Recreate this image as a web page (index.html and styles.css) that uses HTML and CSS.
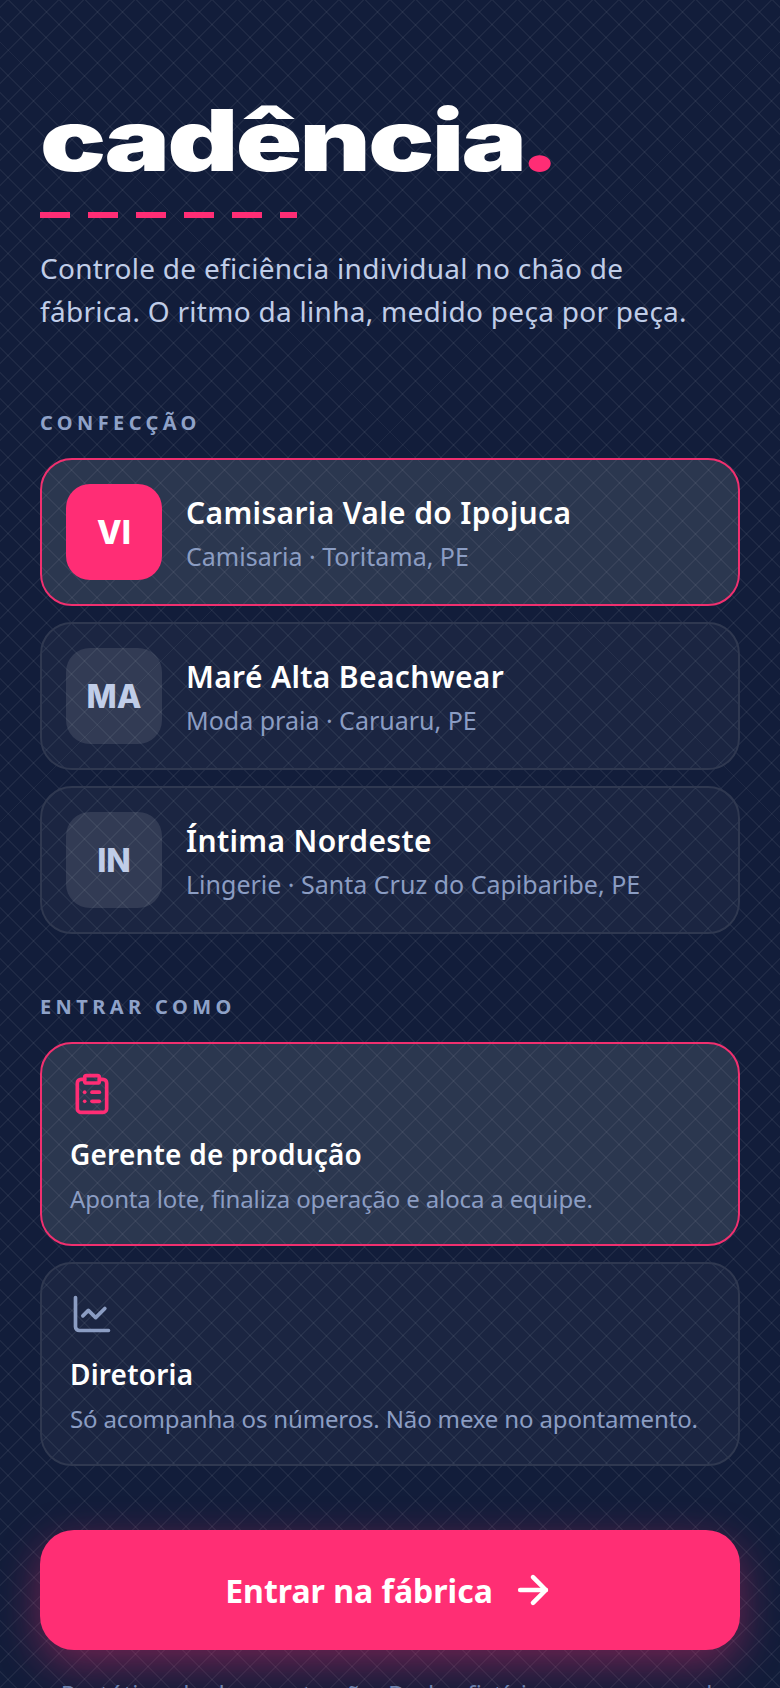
FILE: index.html
```html
<!DOCTYPE html>
<html lang="pt-BR">
  <head>
    <meta charset="UTF-8" />
    <meta name="viewport" content="width=device-width, initial-scale=1.0" />
    <title>Cadência</title>
    <link rel="stylesheet" href="styles.css">
  </head>
  <body>
    <main class="screen">
      <header class="brand">
        <h1 class="logo"><span class="logo-word">cadência<span class="logo-dot">.</span></span></h1>
        <div class="dashes"></div>
        <p class="tagline">Controle de eficiência individual no chão de fábrica. O ritmo da linha, medido peça por peça.</p>
      </header>

      <section class="group">
        <h2 class="group-label">CONFECÇÃO</h2>
        <div class="list">
          <button class="card factory selected">
            <span class="avatar">VI</span>
            <span class="factory-text">
              <span class="factory-name">Camisaria Vale do Ipojuca</span>
              <span class="factory-sub">Camisaria · Toritama, PE</span>
            </span>
          </button>
          <button class="card factory">
            <span class="avatar">MA</span>
            <span class="factory-text">
              <span class="factory-name">Maré Alta Beachwear</span>
              <span class="factory-sub">Moda praia · Caruaru, PE</span>
            </span>
          </button>
          <button class="card factory">
            <span class="avatar">IN</span>
            <span class="factory-text">
              <span class="factory-name">Íntima Nordeste</span>
              <span class="factory-sub">Lingerie · Santa Cruz do Capibaribe, PE</span>
            </span>
          </button>
        </div>
      </section>

      <section class="group">
        <h2 class="group-label">ENTRAR COMO</h2>
        <div class="list">
          <button class="card role selected">
            <svg class="icon" viewBox="0 0 24 24"><rect x="8" y="2" width="8" height="4" rx="1"/><path d="M16 4h2a2 2 0 0 1 2 2v14a2 2 0 0 1-2 2H6a2 2 0 0 1-2-2V6a2 2 0 0 1 2-2h2"/><path d="M12 11h4"/><path d="M12 16h4"/><path d="M8 11h.01"/><path d="M8 16h.01"/></svg>
            <span class="role-name">Gerente de produção</span>
            <span class="role-sub">Aponta lote, finaliza operação e aloca a equipe.</span>
          </button>
          <button class="card role">
            <svg class="icon" viewBox="0 0 24 24"><path d="M3 3v16a2 2 0 0 0 2 2h16"/><path d="m19 9-5 5-4-4-3 3"/></svg>
            <span class="role-name">Diretoria</span>
            <span class="role-sub">Só acompanha os números. Não mexe no apontamento.</span>
          </button>
        </div>
      </section>

      <button class="enter">
        Entrar na fábrica
        <svg class="enter-icon" viewBox="0 0 24 24"><path d="M5 12h14"/><path d="m12 5 7 7-7 7"/></svg>
      </button>
      <p class="footnote">Protótipo de demonstração. Dados fictícios, sem uso real.</p>
    </main>
  </body>
</html>
```

FILE: styles.css
```css
* {
  box-sizing: border-box;
  margin: 0;
  padding: 0;
}
html,
body {
  height: 1688px;
  overflow: hidden;
}
body {
  background-color: #131d3a;
  color: #ffffff;
  font-family: "Noto Sans", Arial, sans-serif;
}

.screen {
  position: relative;
  height: 1688px;
  overflow: hidden;
  padding: 107px 40px 0;
  background-color: #121d3a;
  background-image:
    repeating-linear-gradient(45deg, transparent 0 11.2px, rgba(255, 255, 255, 0.05) 11.2px 12.6px, transparent 12.6px 18px),
    repeating-linear-gradient(-45deg, transparent 0 11.2px, rgba(255, 255, 255, 0.05) 11.2px 12.6px, transparent 12.6px 18px);
}

/* brand */
.brand {
  padding-bottom: 17px;
}
.logo {
  height: 67px;
  font-family: Inter, "Liberation Sans", sans-serif;
  font-size: 85px;
  font-weight: 900;
  line-height: 67px;
}
.logo-word {
  display: inline-block;
  letter-spacing: -2px;
  transform: scaleX(1.29);
  transform-origin: left center;
}
.logo-dot {
  margin-left: -4px;
  color: #ff2d75;
}
.dashes {
  width: 257px;
  height: 6px;
  margin-top: 38px;
  background-image: repeating-linear-gradient(90deg, #ff2d75 0 30px, transparent 30px 48px);
}
.tagline {
  max-width: 650px;
  margin-top: 29px;
  font-size: 28px;
  line-height: 43px;
  letter-spacing: 0.28px;
  color: #c0cde8;
}

/* sections */
.group {
  margin-top: 59px;
}
.group-label {
  font-size: 20px;
  font-weight: 700;
  line-height: 28px;
  letter-spacing: 4.4px;
  color: #8fa2c8;
}
.list {
  display: flex;
  flex-direction: column;
  gap: 16px;
  margin-top: 21px;
}
.card {
  display: flex;
  width: 100%;
  border: 2px solid #2f3850;
  border-radius: 32px;
  background: rgba(255, 255, 255, 0.04);
  color: inherit;
  font-family: inherit;
  text-align: left;
}
.card.selected {
  border-color: #f0306f;
  background: rgba(220, 235, 225, 0.13);
}

/* factory cards */
.factory {
  align-items: center;
  gap: 24px;
  height: 148px;
  padding: 0 24px;
}
.avatar {
  display: flex;
  flex: none;
  align-items: center;
  justify-content: center;
  width: 96px;
  height: 96px;
  border-radius: 24px;
  background: rgba(255, 255, 255, 0.1);
  color: #c0cde8;
  font-family: Inter, sans-serif;
  font-size: 32px;
  font-weight: 800;
}
.selected .avatar {
  background: #ff2d75;
  color: #ffffff;
}
.factory-text {
  display: flex;
  flex-direction: column;
  gap: 7px;
  padding-top: 3px;
}
.factory-name {
  font-size: 30px;
  font-weight: 600;
  line-height: 38px;
  letter-spacing: 0.35px;
}
.factory-sub {
  font-size: 25px;
  line-height: 34px;
  color: #8b9dc3;
}

/* role cards */
.role {
  flex-direction: column;
  height: 204px;
  padding: 28px;
}
.icon {
  flex: none;
  width: 44px;
  height: 44px;
  fill: none;
  stroke: #8b9dc3;
  stroke-width: 2;
  stroke-linecap: round;
  stroke-linejoin: round;
}
.selected .icon {
  stroke: #ff2d75;
}
.role-name {
  margin-top: 20px;
  font-size: 28px;
  font-weight: 600;
  line-height: 36px;
  letter-spacing: 0.2px;
}
.role-sub {
  margin-top: 11px;
  font-size: 24px;
  line-height: 32px;
  letter-spacing: -0.15px;
  color: #8b9dc3;
}

/* enter button */
.enter {
  display: flex;
  align-items: center;
  justify-content: center;
  gap: 18px;
  width: 100%;
  height: 120px;
  margin-top: 64px;
  border: 0;
  border-radius: 34px;
  background: #ff2e74;
  box-shadow: 0 14px 44px rgba(255, 46, 116, 0.4);
  color: #ffffff;
  font-family: inherit;
  font-size: 32px;
  font-weight: 700;
}
.enter-icon {
  flex: none;
  width: 44px;
  height: 44px;
  fill: none;
  stroke: #ffffff;
  stroke-width: 2.5;
  stroke-linecap: round;
  stroke-linejoin: round;
}
.footnote {
  margin-top: 28px;
  font-size: 24px;
  line-height: 32px;
  letter-spacing: 0.2px;
  text-align: center;
  color: #6f82ad;
}
```
